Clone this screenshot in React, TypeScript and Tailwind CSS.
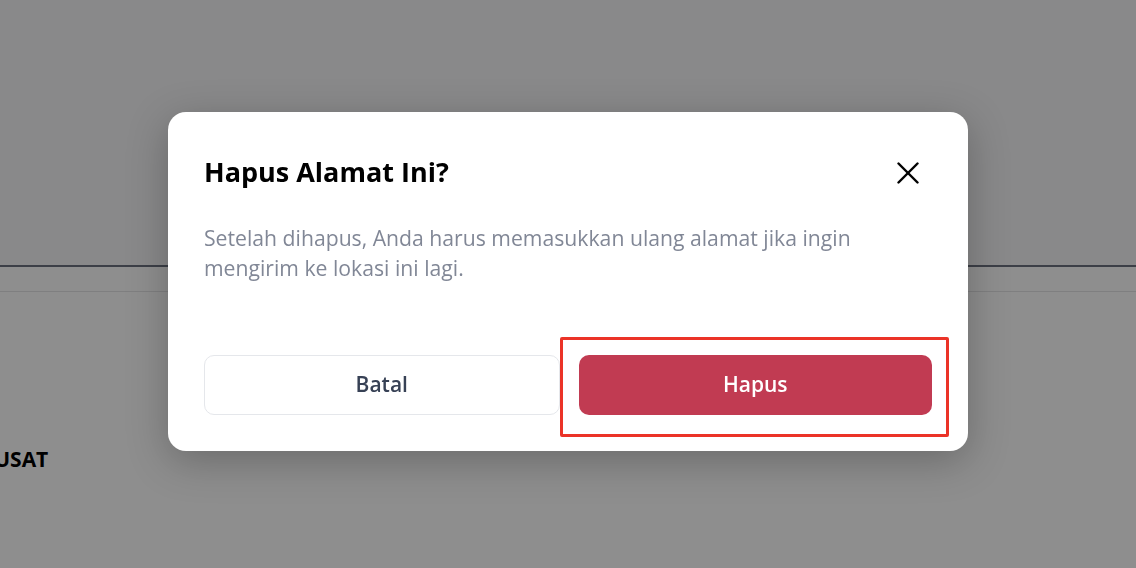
const font = { fontFamily: '"Open Sans", "Noto Sans", sans-serif' };

const CloseIcon = () => (
  <svg width="22" height="22" viewBox="0 0 22 22" fill="none" stroke="currentColor" strokeWidth="2.4" strokeLinecap="round">
    <path d="M1.5 1.5 L20.5 20.5" />
    <path d="M20.5 1.5 L1.5 20.5" />
  </svg>
);

const ConfirmDialog = () => {
  return (
    <div className="fixed inset-0 flex justify-center pt-[112px]">
      <div className="w-[800px] h-fit bg-white rounded-[18px] shadow-[0_10px_40px_rgba(0,0,0,0.25)] px-9 pt-[44px] pb-9">
        <div className="flex items-center justify-between h-8">
          <h2 className="text-[27px] leading-8 font-bold text-black">Hapus Alamat Ini?</h2>
          <button className="text-black mr-[13px] mt-[2px]">
            <CloseIcon />
          </button>
        </div>
        <p className="mt-[35px] text-[21.2px] leading-[30px] text-[#818796]">
          Setelah dihapus, Anda harus memasukkan ulang alamat jika ingin
          <br />
          mengirim ke lokasi ini lagi.
        </p>
        <div className="mt-[72px] flex gap-[19px]">
          <button className="flex-1 h-[60px] rounded-[10px] border border-[#e5e7eb] bg-white text-[21px] font-semibold text-[#374155]">
            Batal
          </button>
          <div className="relative flex-1">
            <button className="w-full h-[60px] rounded-[10px] bg-[#c13b52] text-[21px] font-semibold text-white">
              Hapus
            </button>
            <div className="absolute -left-[19px] -top-[18px] -right-[17px] -bottom-[22px] border-[3px] border-[#eb3328] rounded-[2px] pointer-events-none" />
          </div>
        </div>
      </div>
    </div>
  );
};

const App = () => {
  return (
    <main className="relative w-full h-[568px] overflow-hidden bg-[#8e8e8e]" style={font}>
      <section className="h-[267px] bg-[#89898a] border-b-2 border-[#3c3f47]" />
      <section className="h-[25px] border-b border-[#7f7f80]" />
      <section className="pt-[155px]">
        <p className="-ml-[19px] text-[21px] leading-6 font-bold text-black">PUSAT</p>
      </section>
      <ConfirmDialog />
    </main>
  );
};

export default App;
